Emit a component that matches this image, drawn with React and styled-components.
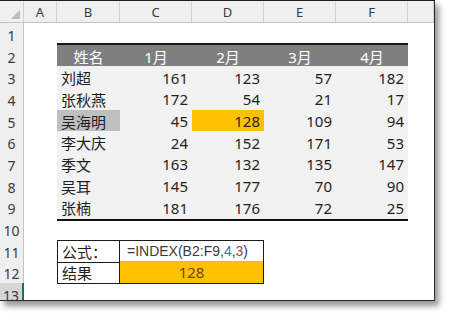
import React from "react";
import styled, { createGlobalStyle } from "styled-components";

const GlobalStyle = createGlobalStyle`
  html, body { margin: 0; padding: 0; background: #ffffff; }
  body { font-family: "Noto Sans", "Noto Sans CJK SC", sans-serif; }
`;

const COLS = "24px 33px 63px 72px 72px 72px 72px 1fr";
const ROW_H = "21.67px";

const Page = styled.div`
  width: 456px;
  height: 321px;
  background: #ffffff;
`;

const Frame = styled.div`
  box-sizing: border-box;
  width: 435px;
  height: 301px;
  background: #ffffff;
  border-top: 1px solid #1f1f1f;
  border-right: 1px solid #2a2a2a;
  border-bottom: 1px solid #2a2a2a;
  box-shadow: 4px 5px 6px rgba(0, 0, 0, 0.42);
  overflow: hidden;
  display: flex;
  flex-direction: column;
`;

const ColumnBar = styled.div`
  display: grid;
  grid-template-columns: ${COLS};
  height: 22px;
  flex: none;
  background: #efefef;
  border-bottom: 1px solid #c4c4c4;
  box-sizing: border-box;
`;

const Corner = styled.div`
  position: relative;
  border-right: 1px solid #d0d0d0;
  &::after {
    content: "";
    position: absolute;
    right: 3px;
    bottom: 3px;
    border-style: solid;
    border-width: 0 0 9px 9px;
    border-color: transparent transparent #bcbcbc transparent;
  }
`;

const ColLabel = styled.div`
  display: flex;
  align-items: center;
  justify-content: center;
  border-right: 1px solid #d2d2d2;
  font-size: 13px;
  color: #3a3a3a;
  padding-top: 1px;
`;

const Row = styled.div`
  display: grid;
  grid-template-columns: ${COLS};
  height: ${ROW_H};
  flex: none;
`;

const RowLabel = styled.div`
  display: flex;
  align-items: center;
  justify-content: center;
  box-sizing: border-box;
  padding-top: 3px;
  font-size: 14px;
  color: #3a3a3a;
  background: ${(p) => (p.$active ? "#d6d6d6" : "#efefef")};
  border-right: ${(p) => (p.$active ? "2px solid #217346" : "1px solid #c4c4c4")};
  border-bottom: 1px solid #d6d6d6;
`;

const Cell = styled.div`
  box-sizing: border-box;
  display: flex;
  align-items: center;
  min-width: 0;
  white-space: nowrap;
  font-size: 15px;
  color: #1e1e1e;
  padding: 0 4px;
  justify-content: ${(p) => p.$align || "flex-start"};
  grid-column: ${(p) => (p.$span ? `span ${p.$span}` : "auto")};
`;

const HeadCell = styled(Cell)`
  background: #7f7f7f;
  color: #ffffff;
  justify-content: center;
  box-shadow: 0 -2px 0 #151515;
`;

const BodyCell = styled(Cell)`
  background: ${(p) => p.$fill || "#f2f2f2"};
  justify-content: ${(p) => (p.$num ? "flex-end" : "flex-start")};
  box-shadow: ${(p) => (p.$last ? "0 2px 0 #151515" : "none")};
`;

const BoxCell = styled(Cell)`
  background: ${(p) => p.$fill || "transparent"};
  border: 1px solid #1a1a1a;
  border-top-width: ${(p) => (p.$top ? "1px" : "0")};
  border-left-width: ${(p) => (p.$left ? "1px" : "0")};
`;

const Formula = styled.span`
  font-family: "Liberation Sans", Arial, sans-serif;
  font-size: 14px;
  color: #3c3c3c;
  padding-left: 3px;
`;

const Arg = styled.span`
  color: ${(p) => p.$color};
`;

const ResultText = styled.span`
  color: #6a4a12;
  font-size: 15px;
`;

const columns = ["A", "B", "C", "D", "E", "F", ""];

const data = [
  { name: "刘超", v: [161, 123, 57, 182] },
  { name: "张秋燕", v: [172, 54, 21, 17] },
  { name: "吴海明", v: [45, 128, 109, 94], mark: true },
  { name: "李大庆", v: [24, 152, 171, 53] },
  { name: "季文", v: [163, 132, 135, 147] },
  { name: "吴耳", v: [145, 177, 70, 90] },
  { name: "张楠", v: [181, 176, 72, 25] },
];

const Empty = () => <Cell />;

export default function App() {
  return (
    <Page>
      <GlobalStyle />
      <Frame>
        <ColumnBar>
          <Corner />
          {columns.map((c, i) => (
            <ColLabel key={i}>{c}</ColLabel>
          ))}
        </ColumnBar>

        <Row>
          <RowLabel>1</RowLabel>
        </Row>

        <Row>
          <RowLabel>2</RowLabel>
          <Empty />
          <HeadCell>姓名</HeadCell>
          <HeadCell>1月</HeadCell>
          <HeadCell>2月</HeadCell>
          <HeadCell>3月</HeadCell>
          <HeadCell>4月</HeadCell>
        </Row>

        {data.map((r, i) => (
          <Row key={r.name}>
            <RowLabel>{i + 3}</RowLabel>
            <Empty />
            <BodyCell $fill={r.mark ? "#bfbfbf" : undefined} $last={i === data.length - 1}>
              {r.name}
            </BodyCell>
            {r.v.map((n, j) => (
              <BodyCell
                key={j}
                $num
                $fill={r.mark && j === 1 ? "#ffc000" : undefined}
                $last={i === data.length - 1}
              >
                {n}
              </BodyCell>
            ))}
          </Row>
        ))}

        <Row>
          <RowLabel>10</RowLabel>
        </Row>

        <Row>
          <RowLabel>11</RowLabel>
          <Empty />
          <BoxCell $top $left>公式：</BoxCell>
          <BoxCell $top $span={2}>
            <Formula>
              =INDEX(B2:F9,<Arg $color="#3f6db5">4</Arg>,<Arg $color="#a3423a">3</Arg>)
            </Formula>
          </BoxCell>
        </Row>

        <Row>
          <RowLabel>12</RowLabel>
          <Empty />
          <BoxCell $left>结果</BoxCell>
          <BoxCell $span={2} $fill="#ffc000" $align="center">
            <ResultText>128</ResultText>
          </BoxCell>
        </Row>

        <Row>
          <RowLabel $active>13</RowLabel>
        </Row>
      </Frame>
    </Page>
  );
}
